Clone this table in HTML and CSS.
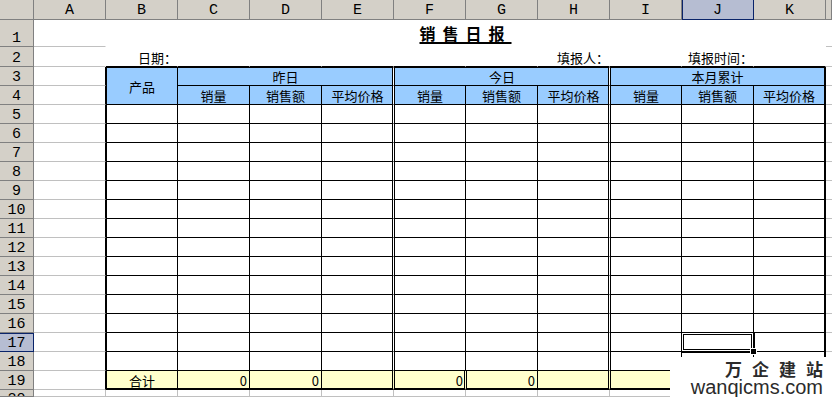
FILE: index.html
```html
<!DOCTYPE html>
<html lang="zh-CN">
<head>
<meta charset="utf-8">
<title>销售日报</title>
<link rel="stylesheet" href="styles.css">
</head>
<body>
<div class="sheet">
  <!-- column headers -->
  <div class="c h colh"></div>
  <div class="c h colh">A</div>
  <div class="c h colh">B</div>
  <div class="c h colh">C</div>
  <div class="c h colh">D</div>
  <div class="c h colh">E</div>
  <div class="c h colh">F</div>
  <div class="c h colh">G</div>
  <div class="c h colh">H</div>
  <div class="c h colh">I</div>
  <div class="c h colh hs hsc">J</div>
  <div class="c h colh">K</div>
  <div class="c h colh"></div>

  <!-- row 1 -->
  <div class="c h rowh">1</div>
  <div class="c nr"></div>
  <div class="c w title s10"><span class="ttl">销售日报</span></div>
  <div class="c"></div>

  <!-- row 2 -->
  <div class="c h rowh">2</div>
  <div class="c nr"></div>
  <div class="c w top r2 rt">日期：</div>
  <div class="c w top r2"></div>
  <div class="c w top r2"></div>
  <div class="c w top r2"></div>
  <div class="c w top r2"></div>
  <div class="c w top r2"></div>
  <div class="c w top r2 rt">填报人：</div>
  <div class="c w top r2"></div>
  <div class="c w top r2 rt">填报时间：</div>
  <div class="c w top r2"></div>
  <div class="c"></div>

  <!-- row 3 -->
  <div class="c h rowh">3</div>
  <div class="c ar"></div>
  <div class="c t lb r3 blue ctr rs2">产品</div>
  <div class="c t r3 blue ctr dbl s3">昨日</div>
  <div class="c t r3 lb blue ctr dbl s3">今日</div>
  <div class="c t r3 lb blue ctr kr s3">本月累计</div>
  <div class="c"></div>

  <!-- row 4 -->
  <div class="c h rowh">4</div>
  <div class="c ar"></div>
  <div class="c t blue ctr">销量</div>
  <div class="c t blue ctr">销售额</div>
  <div class="c t blue ctr dbl">平均价格</div>
  <div class="c t lb blue ctr">销量</div>
  <div class="c t blue ctr">销售额</div>
  <div class="c t blue ctr dbl">平均价格</div>
  <div class="c t lb blue ctr">销量</div>
  <div class="c t blue ctr">销售额</div>
  <div class="c t blue ctr kr">平均价格</div>
  <div class="c"></div>

  <!-- row 5 -->
  <div class="c h rowh">5</div>
  <div class="c ar"></div>
  <div class="c t lb"></div><div class="c t"></div><div class="c t"></div><div class="c t dbl"></div>
  <div class="c t lb"></div><div class="c t"></div><div class="c t dbl"></div>
  <div class="c t lb"></div><div class="c t"></div><div class="c t kr"></div>
  <div class="c"></div>

  <!-- row 6 -->
  <div class="c h rowh">6</div>
  <div class="c ar"></div>
  <div class="c t lb"></div><div class="c t"></div><div class="c t"></div><div class="c t dbl"></div>
  <div class="c t lb"></div><div class="c t"></div><div class="c t dbl"></div>
  <div class="c t lb"></div><div class="c t"></div><div class="c t kr"></div>
  <div class="c"></div>

  <!-- row 7 -->
  <div class="c h rowh">7</div>
  <div class="c ar"></div>
  <div class="c t lb"></div><div class="c t"></div><div class="c t"></div><div class="c t dbl"></div>
  <div class="c t lb"></div><div class="c t"></div><div class="c t dbl"></div>
  <div class="c t lb"></div><div class="c t"></div><div class="c t kr"></div>
  <div class="c"></div>

  <!-- row 8 -->
  <div class="c h rowh">8</div>
  <div class="c ar"></div>
  <div class="c t lb"></div><div class="c t"></div><div class="c t"></div><div class="c t dbl"></div>
  <div class="c t lb"></div><div class="c t"></div><div class="c t dbl"></div>
  <div class="c t lb"></div><div class="c t"></div><div class="c t kr"></div>
  <div class="c"></div>

  <!-- row 9 -->
  <div class="c h rowh">9</div>
  <div class="c ar"></div>
  <div class="c t lb"></div><div class="c t"></div><div class="c t"></div><div class="c t dbl"></div>
  <div class="c t lb"></div><div class="c t"></div><div class="c t dbl"></div>
  <div class="c t lb"></div><div class="c t"></div><div class="c t kr"></div>
  <div class="c"></div>

  <!-- row 10 -->
  <div class="c h rowh">10</div>
  <div class="c ar"></div>
  <div class="c t lb"></div><div class="c t"></div><div class="c t"></div><div class="c t dbl"></div>
  <div class="c t lb"></div><div class="c t"></div><div class="c t dbl"></div>
  <div class="c t lb"></div><div class="c t"></div><div class="c t kr"></div>
  <div class="c"></div>

  <!-- row 11 -->
  <div class="c h rowh">11</div>
  <div class="c ar"></div>
  <div class="c t lb"></div><div class="c t"></div><div class="c t"></div><div class="c t dbl"></div>
  <div class="c t lb"></div><div class="c t"></div><div class="c t dbl"></div>
  <div class="c t lb"></div><div class="c t"></div><div class="c t kr"></div>
  <div class="c"></div>

  <!-- row 12 -->
  <div class="c h rowh">12</div>
  <div class="c ar"></div>
  <div class="c t lb"></div><div class="c t"></div><div class="c t"></div><div class="c t dbl"></div>
  <div class="c t lb"></div><div class="c t"></div><div class="c t dbl"></div>
  <div class="c t lb"></div><div class="c t"></div><div class="c t kr"></div>
  <div class="c"></div>

  <!-- row 13 -->
  <div class="c h rowh">13</div>
  <div class="c ar"></div>
  <div class="c t lb"></div><div class="c t"></div><div class="c t"></div><div class="c t dbl"></div>
  <div class="c t lb"></div><div class="c t"></div><div class="c t dbl"></div>
  <div class="c t lb"></div><div class="c t"></div><div class="c t kr"></div>
  <div class="c"></div>

  <!-- row 14 -->
  <div class="c h rowh">14</div>
  <div class="c ar"></div>
  <div class="c t lb"></div><div class="c t"></div><div class="c t"></div><div class="c t dbl"></div>
  <div class="c t lb"></div><div class="c t"></div><div class="c t dbl"></div>
  <div class="c t lb"></div><div class="c t"></div><div class="c t kr"></div>
  <div class="c"></div>

  <!-- row 15 -->
  <div class="c h rowh">15</div>
  <div class="c ar"></div>
  <div class="c t lb"></div><div class="c t"></div><div class="c t"></div><div class="c t dbl"></div>
  <div class="c t lb"></div><div class="c t"></div><div class="c t dbl"></div>
  <div class="c t lb"></div><div class="c t"></div><div class="c t kr"></div>
  <div class="c"></div>

  <!-- row 16 -->
  <div class="c h rowh">16</div>
  <div class="c ar"></div>
  <div class="c t lb"></div><div class="c t"></div><div class="c t"></div><div class="c t dbl"></div>
  <div class="c t lb"></div><div class="c t"></div><div class="c t dbl"></div>
  <div class="c t lb"></div><div class="c t"></div><div class="c t kr"></div>
  <div class="c"></div>

  <!-- row 17 -->
  <div class="c h rowh hs hsr">17</div>
  <div class="c ar"></div>
  <div class="c t lb"></div><div class="c t"></div><div class="c t"></div><div class="c t dbl"></div>
  <div class="c t lb"></div><div class="c t"></div><div class="c t dbl"></div>
  <div class="c t lb"></div><div class="c t sel"></div><div class="c t kr"></div>
  <div class="c"></div>

  <!-- row 18 -->
  <div class="c h rowh">18</div>
  <div class="c ar"></div>
  <div class="c t lb"></div><div class="c t"></div><div class="c t"></div><div class="c t dbl"></div>
  <div class="c t lb"></div><div class="c t"></div><div class="c t dbl"></div>
  <div class="c t lb"></div><div class="c t"></div><div class="c t kr"></div>
  <div class="c"></div>

  <!-- row 19 -->
  <div class="c h rowh">19</div>
  <div class="c ar"></div>
  <div class="c t lb bb yel cb">合计</div>
  <div class="c t bb yel num">0</div>
  <div class="c t bb yel num">0</div>
  <div class="c t bb yel dbl"></div>
  <div class="c t lb bb yel num dbl">0</div>
  <div class="c t lb bb yel num">0</div>
  <div class="c t bb yel dbl"></div>
  <div class="c t lb bb yel"></div>
  <div class="c t bb yel"></div>
  <div class="c t bb yel kr"></div>
  <div class="c"></div>

  <!-- row 20 (partly visible) -->
  <div class="c h rowh last">20</div>
  <div class="c"></div><div class="c"></div><div class="c"></div><div class="c"></div>
  <div class="c"></div><div class="c"></div><div class="c"></div><div class="c"></div>
  <div class="c"></div><div class="c"></div><div class="c"></div><div class="c"></div>
</div>

<div class="wm">
  <div class="wm1">万企建站</div>
  <div class="wm2">wanqicms.com</div>
</div>
</body>
</html>
```

FILE: styles.css
```css
html, body {
  margin: 0;
  padding: 0;
  background: #fff;
  overflow: hidden;
}
body {
  width: 832px;
  height: 397px;
  position: relative;
  font-family: "Noto Sans CJK SC", "Noto Sans", sans-serif;
  font-size: 13px;
  color: #000;
}
.sheet {
  display: grid;
  grid-template-columns: 34px repeat(11, 72px) 6px;
  grid-template-rows: 20px 27px 20px repeat(17, 19px) 7px;
}
.c {
  box-sizing: border-box;
  border-right: 1px solid #c0c0c0;
  border-bottom: 1px solid #c0c0c0;
  display: flex;
  align-items: flex-end;
  justify-content: flex-start;
  line-height: 15px;
  padding: 0 3px 0 3px;
  white-space: nowrap;
  overflow: hidden;
  background: #fff;
}
/* headers */
.h {
  background: #d4d0c8;
  border-right-color: #808080;
  border-bottom-color: #808080;
  font-family: "Liberation Mono", "DejaVu Sans Mono", monospace;
  font-size: 15px;
  line-height: 14px;
  justify-content: center;
  padding: 0;
}
.colh { align-items: center; padding-top: 2px; }
.rowh { padding-bottom: 0; }
.last { align-items: flex-start; padding-top: 3px; }
.hs {
  background: #b6bdd2;
  border-right-color: #0a246a;
  border-bottom-color: #0a246a;
}
.hsc { box-shadow: inset 1px 0 0 #0a246a; }
.hsr { box-shadow: inset 0 1px 0 #0a246a; }

/* spans */
.s10 { grid-column: span 10; }
.s3 { grid-column: span 3; }
.rs2 { grid-row: span 2; }

/* white-filled area (no gridlines) */
.nr { border-right-color: #fff; }
.w { border-right-color: #fff; border-bottom-color: #fff; }
.top { border-bottom-color: #000; }
.r2 { padding-bottom: 1px; }
.rt { justify-content: flex-end; padding-right: 0; }

.title {
  justify-content: center;
  padding-bottom: 4px;
}
.ttl {
  font-size: 16px;
  line-height: 17px;
  font-weight: 700;
  letter-spacing: 7px;
  text-decoration: underline;
  text-decoration-thickness: 2px;
  text-underline-offset: 2px;
}

/* table */
.t { border-right-color: #000; border-bottom-color: #000; }
.ar { border-right-color: #000; }
.lb { border-left: 1px solid #000; }
.r3 { border-top: 1px solid #000; }
.dbl { border-right-color: #fff; box-shadow: inset -1px 0 0 #000; }
.kr { border-right: 2px solid #000; }
.bb { border-bottom: 2px solid #000; }
.blue { background: #99ccff; }
.yel { background: #ffffcc; }
.yel.dbl { border-right-color: #ffffcc; }
.ctr { justify-content: center; align-items: center; padding: 0; }
.cb { justify-content: center; padding: 0; }
.num { justify-content: flex-end; padding-right: 2px; }

/* selected cell */
.sel {
  position: relative;
  overflow: visible;
  outline: 1px solid #000;
  box-shadow: inset 0 0 0 1px #fff, inset 0 0 0 2px #000;
  z-index: 1;
}
.sel::after {
  content: "";
  position: absolute;
  right: -4px;
  bottom: -4px;
  width: 5px;
  height: 5px;
  background: #000;
  border: 1px solid #fff;
}

/* watermark */
.wm {
  position: absolute;
  left: 670px;
  top: 357px;
  width: 162px;
  height: 40px;
  background: #fff;
  box-sizing: border-box;
  padding-right: 9px;
  display: flex;
  flex-direction: column;
  align-items: flex-end;
  color: #2b2b2b;
  z-index: 2;
}
.wm1 {
  font-family: "Noto Sans CJK SC", sans-serif;
  font-weight: 700;
  font-size: 17px;
  line-height: 18px;
  letter-spacing: 10px;
  margin-right: -10px;
  margin-top: 3px;
}
.wm2 {
  font-family: "Liberation Sans", Arial, sans-serif;
  font-size: 20px;
  line-height: 18px;
}
```
